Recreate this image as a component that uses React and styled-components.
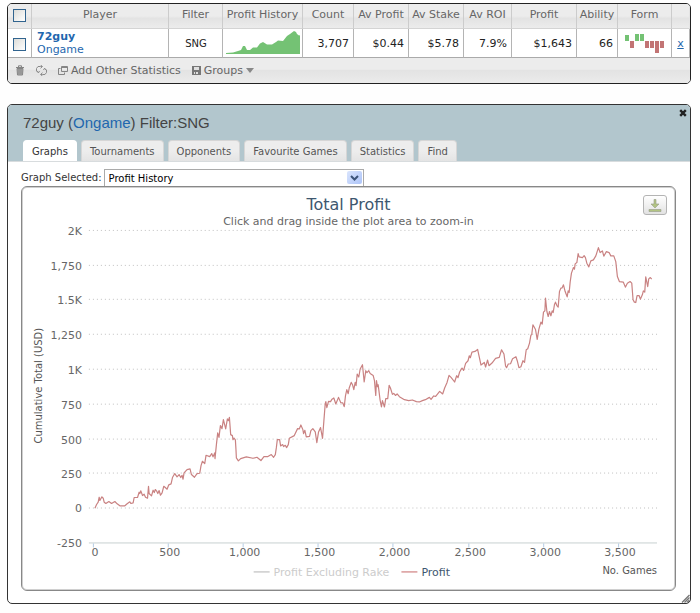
import React, { useState } from "react";
import styled, { createGlobalStyle } from "styled-components";

const GlobalStyle = createGlobalStyle`
  *, *::before, *::after { box-sizing: border-box; }
  body {
    margin: 0;
    background: #fefefe;
    font-family: "DejaVu Sans", Verdana, sans-serif;
    font-size: 11px;
    color: #333;
  }
  button, select, input { font: inherit; color: inherit; margin: 0; }
`;

const Page = styled.main`
  display: flex;
  flex-direction: column;
  gap: 20px;
  padding: 3px 9px 9px 7px;
`;

const StatsPanel = styled.section`
  border: 1px solid #222;
  border-radius: 5px;
  overflow: hidden;
  background: #ebebeb;
`;

const StatsTable = styled.table`
  width: 100%;
  table-layout: fixed;
  border-collapse: separate;
  border-spacing: 0;
`;

const Col = styled.col`
  width: ${(p) => (p.$w ? `${p.$w}px` : "auto")};
`;

const HeadCell = styled.th`
  height: 25px;
  padding: 0 0 3px;
  font-weight: normal;
  text-align: center;
  white-space: nowrap;
  color: #666;
  border-right: 1px solid #ccc;
  border-bottom: 1px solid #d4d4d4;
  background: linear-gradient(#ececec 0 50%, #e3e3e3 60%, #ececec);
  &:last-child { border-right-color: #e4e4e4; }
`;

const Cell = styled.td`
  height: 29px;
  padding: ${(p) => (p.$flush ? "0" : "0 4px 0 5px")};
  text-align: ${(p) => p.$align || "right"};
  line-height: 13px;
  color: #222;
  white-space: nowrap;
  background: #fff;
  border-right: 1px solid #b4b4b4;
  border-bottom: 1px solid #aaa;
  svg { display: block; margin: 0 auto; }
`;

const CheckBox = styled.input`
  appearance: none;
  display: block;
  width: 13px;
  height: 13px;
  margin: 0 auto;
  border: 1px solid #31648f;
  background: linear-gradient(135deg, #dcdcd8, #fff);
  &:checked { background: #4b80ad; }
`;

const CheckHolder = styled.div`
  padding-top: 2px;
`;

const Link = styled.a`
  color: #1f67ae;
  font-weight: ${(p) => (p.$strong ? "bold" : "normal")};
  text-decoration: ${(p) => (p.$underline ? "underline" : "none")};
`;

const PlayerName = styled.div`
  display: flex;
  flex-direction: column;
`;

const FilterName = styled.span`
  font-size: 10px;
`;

const TableBar = styled.div`
  display: flex;
  align-items: center;
  gap: 11px;
  height: 25px;
  padding: 0 7px;
  background: linear-gradient(#ececec 0 45%, #e3e3e3 50%, #ebebeb);
`;

const BarButton = styled.button`
  display: flex;
  align-items: center;
  gap: 3px;
  padding: 0;
  border: 0;
  background: none;
  color: #666;
`;

const Window = styled.section`
  position: relative;
  border: 1px solid #333;
  border-radius: 5px;
  background: #fff;
  overflow: hidden;
`;

const WindowHead = styled.header`
  background: #b2c6cd;
  border-bottom: 1px solid #d8dcde;
  padding: 0 15px;
`;

const TitleRow = styled.div`
  display: flex;
  justify-content: space-between;
  height: 35px;
`;

const Title = styled.h1`
  margin: 0;
  padding-top: 8px;
  font: 15px/20px "Liberation Sans", Arial, sans-serif;
  color: #444;
`;

const CloseButton = styled.button`
  width: 8px;
  height: 8px;
  margin: 4px -12px 0 0;
  padding: 0;
  border: 0;
  background: none;
  svg { display: block; }
`;

const Tabs = styled.nav`
  display: flex;
  gap: 4px;
`;

const Tab = styled.button`
  height: 21px;
  padding: 0 8px;
  border: 1px solid ${(p) => (p.$active ? "#fff" : "#d6d6d6")};
  border-bottom: 0;
  border-radius: 4px 4px 0 0;
  background: ${(p) => (p.$active ? "#fff" : "linear-gradient(#ededed 50%, #e4e4e4)")};
  color: ${(p) => (p.$active ? "#333" : "#555")};
  font-size: 10px;
`;

const WindowBody = styled.div`
  padding: 7px 14px 12px 13px;
`;

const PickerRow = styled.div`
  display: flex;
  align-items: center;
  gap: 2px;
  font-size: 10px;
`;

const SelectBox = styled.div`
  display: grid;
  width: 260px;
  align-items: center;
  > * { grid-area: 1 / 1; }
`;

const GraphSelect = styled.select`
  appearance: none;
  height: 17px;
  padding: 0 20px 0 4px;
  border: 1px solid #aaa;
  border-bottom: 0;
  border-radius: 0;
  background: #fff;
  color: #000;
`;

const SelectArrow = styled.span`
  justify-self: end;
  display: grid;
  place-items: center;
  width: 15px;
  height: 13px;
  margin-right: 2px;
  border-radius: 2px;
  background: linear-gradient(135deg, #dae5fd, #adc4f8);
  pointer-events: none;
`;

const ChartFrame = styled.div`
  position: relative;
  border: 1px solid #888;
  border-radius: 6px;
  box-shadow: inset 0 0 0 1px #d0d0d0;
`;

const ChartSvg = styled.svg`
  display: block;
  width: 100%;
  height: auto;
  font-family: "DejaVu Sans", Verdana, sans-serif;
`;

const DownloadButton = styled.button`
  position: absolute;
  top: 8px;
  right: 8px;
  display: grid;
  place-items: center;
  width: 24px;
  height: 20px;
  padding: 0;
  border: 1px solid #b4b4b4;
  border-radius: 3px;
  background: linear-gradient(#fff, #e2e2e2);
`;

const ResizeGrip = styled.svg`
  position: absolute;
  right: 0;
  bottom: 0;
`;

const columns = [
  ["Player", 0], ["Filter", 54], ["Profit History", 80], ["Count", 51],
  ["Av Profit", 55], ["Av Stake", 55], ["Av ROI", 48], ["Profit", 65],
  ["Ability", 41], ["Form", 54], ["", 18],
];

const tabNames = ["Graphs", "Tournaments", "Opponents", "Favourite Games", "Statistics", "Find"];

const yTicks = [
  ["2K", 231], ["1,750", 266], ["1.5K", 300], ["1,250", 335], ["1K", 370],
  ["750", 405], ["500", 440], ["250", 474], ["0", 509],
];

const xTicks = [
  ["0", 94], ["500", 169], ["1,000", 244], ["1,500", 319],
  ["2,000", 394], ["2,500", 470], ["3,000", 545], ["3,500", 620],
];

const profitLine = `95,508.7 96.7,505 98.3,502.7 99.3,497.7 100,501 102,497.3 103.3,498.7 104.3,502.7 106,504 109,502
111.7,504 115,502 117.3,504.3 120,506.3 125,506.3 127.3,504.3 130,502.3 131,504 133.3,503.3 134.3,498 137.7,498
139.3,492.7 140,494 141,491.3 142.7,496 144.3,494.7 145.7,497.7 147.7,498.7 148.7,486.7 149.3,494 151.7,496.3 153.3,490.7
154.5,493 155.5,490 156.7,491.3 158,494 159.3,491 160.7,495.7 162.3,493.3 164,486.7 165.5,488 167.3,489.7 169,485.3 171.3,484.3 172.7,478
175,474 177.3,477.3 179.3,475 181,478 182.3,475.7 183.3,479.7 184.3,473.3 187.3,470 190.3,469.3 191.7,475
194.7,477.7 197.3,474 200,473.7 201.3,466 202.7,461.7 205,464 206.3,455.7 210,457 212,454 213.3,457.3 215,453.3
215.3,459 216.7,445 218,433.3 219.3,437.7 220.7,426 222.3,429 223.7,420 226,429.3 227.7,419.3 228.7,421 229.7,417.7
231,435 232.7,436 233.3,440 234.3,438.5 235.7,440.3 236.3,450 236.7,458.3 238.7,461.3 241,459 246.7,457.3 253.3,458.7 257.3,457.7
261.3,461 264.3,457 268.3,457 271.7,455 274,457.7 275.7,455 276.7,448.3 277.7,440 280,440 281,446.3 283,445 284,447 285.7,445.7
287,448 288.7,445 289.7,438.7 294.7,436 298,429 299.7,429.3 301.3,425.3 303.3,430 304,434 305.3,430.7
306.7,437.3 310,436.7 311.3,431 313.3,429 315.7,432.3 317.3,443 319,432.3 321,428 323,438.7 324.3,421.7 325.7,404
326.3,402 327.3,408 329,401.7 331,402 332.5,399.5 334.3,398.3 336.3,404.3 339,397.7 341.3,403 343.3,403.3 344.7,407 346,396 347.3,390
348.7,394 349.7,388.3 351.7,382.7 353,385 354.3,390 355.7,382.7 356.6,386 357.7,374.3 359.3,377.3 360.7,369.3 363,365 364.7,382.3 366.3,371
367.5,373 369.3,371 370.7,373.7 373.7,375.7 375,381 376.3,395.7 377,381 378,387 378.7,385 380.7,400.7 382,407.3 383,401 385,407.3 386.3,399
388.3,399 389.7,385.7 391,388.3 393,394.7 394.3,393.8 396,395.8 397.7,394.3 400,397 405,400 409.3,401 413,400.3 417,402 420,402.3 423,401
426,400 430,397.7 431.7,399.7 434.3,396.3 436.3,396.7 440.3,391.7 443.3,394.3 445.3,388.3 447.7,382.7 449.7,375.7
451.7,377.7 455.3,382.3 457.3,376 458.7,378 460.3,372.3 462.7,368.3 464.3,370.7 466.3,363.7 468.7,361 470,356 471,358 472.7,352.3
475.7,351.7 478.3,349.7 480,357.3 481.7,365.3 485,362.7 486.3,367.3 488.3,360.3 489.7,366 492.7,363.3 496.3,358.7
500,357.7 502.3,350 504.7,354.3 506.3,366.3 507.3,368 509,364.3 511.3,364 513.3,359 516.7,357 518,361 519.7,368 521.7,367
523.7,361 525.3,362.7 527,350 528.5,349 530.3,343.3 531.7,335.3 532.5,335 533.7,325 536.3,329.7 538,339.7 539.7,329.3 541.7,322.3 543,324.3 544.3,312.3
545.7,311 546.3,298.3 547.7,311.7 549,316.7 550.3,311.7 551.7,316 553,311 554,312.7 555.3,304.7 556.3,302.3 557.7,305.7 559,307.3
560.3,291.7 561.7,288.3 563,288 564.3,285 566,291.7 568,297 569,291 570,292.7 571,282.3 572.3,273.3 574.3,267.7 575.3,269.3 576,264
577.7,262.7 579,253.7 580,257 583.3,257.7 585,255.7 586.3,257.7 587.7,263.3 589.7,267 591.7,261 594.3,260 596.7,256
599.3,247.7 601,252.7 603.3,251 604.7,256.3 607.3,251.7 610,252.7 611.7,256 614.7,256 616.7,261.7 618.3,276.7
620.3,281.7 624.3,282.3 626.3,287.3 628.3,283.3 631,281.7 632.7,283.3 634,300 635.3,302.3 636.7,302.7 638,295.7
640,295.7 641.3,299.3 643.3,295 644.3,291 645.7,292.3 646.7,277 648.7,286.7 649.7,279 651.3,277.7 652.7,279.3`;

// One bar per recent result: a win rises above the middle line, a loss hangs below it.
const form = [6, -7, 7, 7, -7, -7, -12, -7];

function ProfitSpark() {
  return (
    <svg width="74" height="24" viewBox="0 0 74 24" role="img" aria-label="Profit history">
      <path
        fill="#74c274"
        d="M0 23v-1l7-.5 5-1.500 3-1 2-4h2l2 4h3l3-2.500h4l3-4 3-1.500 4 2.500h5l4-2.500 2-1.500 5 .5 4-5 3-2 4-3 2 1 1 2 2 1.500 1.500-.5V23z"
      />
    </svg>
  );
}

function FormBars() {
  return (
    <svg width="40" height="20" viewBox="0 0 40 20" role="img" aria-label="Recent form">
      {form.map((v, i) => (
        <rect key={i} x={i * 5} y={v > 0 ? 8 - v : 8} width="4" height={Math.abs(v)}
          fill={v > 0 ? "#74c274" : "#c27474"} />
      ))}
    </svg>
  );
}

function Chart() {
  return (
    <ChartSvg viewBox="22 187 654 404" role="img" aria-label="Total profit by number of games">
      <text x="349" y="210" fontSize="16" fill="#3e576f" textAnchor="middle">Total Profit</text>
      <text x="349" y="225" fontSize="11" fill="#666" textAnchor="middle">
        Click and drag inside the plot area to zoom-in
      </text>
      {yTicks.map(([label, y]) => (
        <g key={label}>
          <path d={`M89 ${y - 0.5}H658`} stroke="#c0c0c0" strokeDasharray="1 3" />
          <text x="82" y={y + 4} fontSize="11" fill="#666" textAnchor="end">{label}</text>
        </g>
      ))}
      <text x="82" y="548" fontSize="11" fill="#666" textAnchor="end">-250</text>
      <path d="M89 543.500H658" stroke="#c8d0d0" />
      {xTicks.map(([label, x]) => (
        <g key={label}>
          <path d={`M${x - 0.5} 544v4`} stroke="#b4cce4" />
          <text x={x + 1} y="557" fontSize="11" fill="#666" textAnchor="middle">{label}</text>
        </g>
      ))}
      <text transform="translate(42 386) rotate(-90)" fontSize="10" fill="#555" textAnchor="middle">
        Cumulative Total (USD)
      </text>
      <text x="658" y="575" fontSize="10" fill="#555" textAnchor="end">No. Games</text>
      <polyline points={profitLine} fill="none" stroke="#c98282" strokeWidth="1.2" strokeLinejoin="round" />
      <path d="M254 572.500h16" stroke="#ccc" strokeWidth="1.5" />
      <text x="274" y="577" fontSize="11" fill="#ccc">Profit Excluding Rake</text>
      <path d="M402 572.500h16" stroke="#d99a9a" strokeWidth="1.5" />
      <text x="422" y="577" fontSize="11" fill="#3e576f">Profit</text>
    </ChartSvg>
  );
}

export default function App() {
  const [tab, setTab] = useState("Graphs");
  return (
    <>
      <GlobalStyle />
      <Page>
        <StatsPanel>
          <StatsTable>
            <colgroup>
              <Col $w={24} />
              {columns.map(([name, w]) => <Col key={name} $w={w} />)}
            </colgroup>
            <thead>
              <tr>
                <HeadCell><CheckHolder><CheckBox type="checkbox" aria-label="Select all" /></CheckHolder></HeadCell>
                {columns.map(([name]) => <HeadCell key={name} scope="col">{name}</HeadCell>)}
              </tr>
            </thead>
            <tbody>
              <tr>
                <Cell $flush><CheckHolder><CheckBox type="checkbox" aria-label="Select 72guy" /></CheckHolder></Cell>
                <Cell $align="left">
                  <PlayerName><Link href="#player" $strong>72guy</Link><Link href="#network">Ongame</Link></PlayerName>
                </Cell>
                <Cell $align="center"><FilterName>SNG</FilterName></Cell>
                <Cell $flush><ProfitSpark /></Cell>
                <Cell>3,707</Cell>
                <Cell>$0.44</Cell>
                <Cell>$5.78</Cell>
                <Cell>7.9%</Cell>
                <Cell>$1,643</Cell>
                <Cell>66</Cell>
                <Cell $flush><FormBars /></Cell>
                <Cell $flush $align="center"><Link href="#remove" $underline>x</Link></Cell>
              </tr>
            </tbody>
          </StatsTable>
          <TableBar>
            <BarButton aria-label="Delete">
              <svg width="10" height="11" viewBox="0 0 10 11" fill="none" stroke="#858585">
                <path d="M1 2.500h8M3.500 2V.8h3V2" /><path d="M2 3.500h6l-.5 6.500h-5z" fill="#aaa" /><path d="M4 4v5M6 4v5" />
              </svg>
            </BarButton>
            <BarButton aria-label="Refresh">
              <svg width="11" height="11" viewBox="0 0 11 11" fill="none" stroke="#8a8a8a">
                <path d="M6 1.500H4.500a3 3 0 0 0-2 6M5 9.500h1.500a3 3 0 0 0 2-6" />
                <path d="M4.500 0l2 1.500-2 1.800M6.500 7.700l-2 1.800 2 1.500M.8 6l1.700 1.800L3.500 6M7.500 5l1-1.700L10.200 5" />
              </svg>
            </BarButton>
            <BarButton>
              <svg width="10" height="9" viewBox="0 0 10 9" fill="none" stroke="#858585">
                <path d="M3.500.5h6v5h-6zM3.500 1.500h6M2.500 2.500h-2v6h6v-2" />
              </svg>
              Add Other Statistics
            </BarButton>
            <BarButton>
              <svg width="9" height="9" viewBox="0 0 9 9">
                <path d="M0 0h9v9H0z" fill="#777" /><path d="M2 1h5v3H2zM2 6h4v2H2z" fill="#e0e0e0" /><path d="M3 6h1v2H3z" fill="#777" />
              </svg>
              Groups
              <svg width="8" height="5" viewBox="0 0 8 5"><path d="M0 0h8L4 5z" fill="#888" /></svg>
            </BarButton>
          </TableBar>
        </StatsPanel>

        <Window>
          <WindowHead>
            <TitleRow>
              <Title>72guy (<Link href="#network">Ongame</Link>) Filter:SNG</Title>
              <CloseButton aria-label="Close">
                <svg width="8" height="8" viewBox="0 0 8 8"><path d="M1.200 1.200l5.600 5.600M6.800 1.200L1.200 6.800" stroke="#222" strokeWidth="2.4" /></svg>
              </CloseButton>
            </TitleRow>
            <Tabs>
              {tabNames.map((name) => (
                <Tab key={name} $active={tab === name} onClick={() => setTab(name)}>{name}</Tab>
              ))}
            </Tabs>
          </WindowHead>
          <WindowBody>
            <PickerRow>
              <label htmlFor="graph">Graph Selected:</label>
              <SelectBox>
                <GraphSelect id="graph"><option>Profit History</option></GraphSelect>
                <SelectArrow>
                  <svg width="9" height="6" viewBox="0 0 9 6"><path d="M1 1l3.500 3.500L8 1" fill="none" stroke="#3c5478" strokeWidth="2" /></svg>
                </SelectArrow>
              </SelectBox>
            </PickerRow>
            <ChartFrame>
              <Chart />
              <DownloadButton aria-label="Download chart">
                <svg width="14" height="13" viewBox="0 0 14 13" fill="#b2c482" stroke="#969a88" strokeWidth=".6">
                  <path d="M6 .5h2v4.500h3L7 9 3 5h3zM1 10.500h12v2H1z" />
                </svg>
              </DownloadButton>
            </ChartFrame>
          </WindowBody>
          <ResizeGrip width="9" height="9" viewBox="0 0 9 9" aria-hidden="true">
            <path d="M1 8.500l7.500-7.500M3.500 8.500l5-5M6 8.500L8.500 6" stroke="#777" strokeWidth="1.4" />
          </ResizeGrip>
        </Window>
      </Page>
    </>
  );
}
